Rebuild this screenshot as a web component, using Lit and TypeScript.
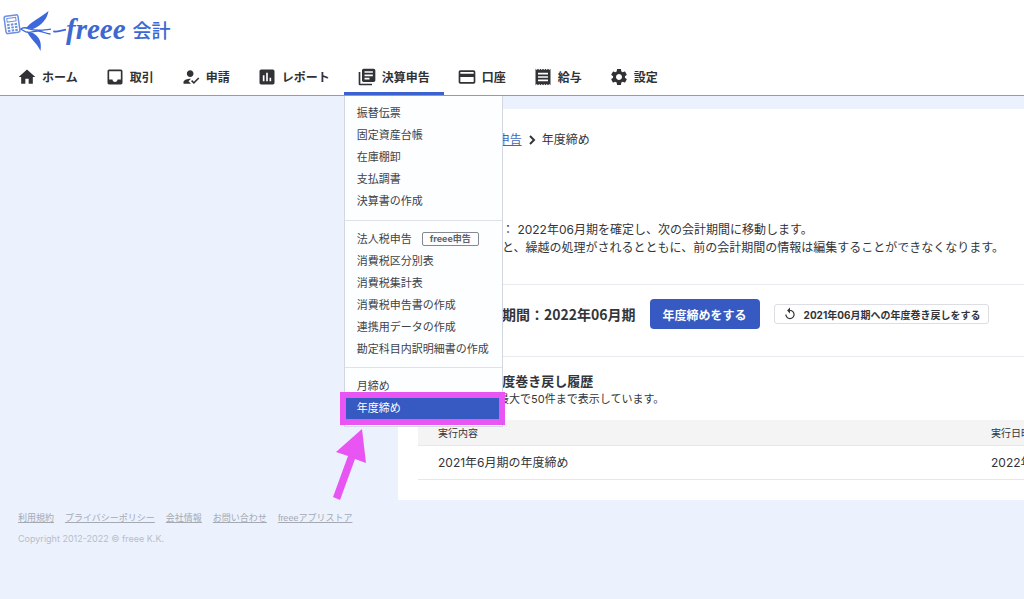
import { LitElement, html, svg, css, nothing } from "lit";
import { customElement } from "lit/decorators.js";
import { classMap } from "lit/directives/class-map.js";

const icons = {
  home: svg`<path d="M10 20v-6h4v6h5v-8h3L12 3 2 12h3v8z"/>`,
  inbox: svg`<path d="M19 3H5c-1.1 0-2 .9-2 2v14c0 1.1.9 2 2 2h14c1.1 0 2-.9 2-2V5c0-1.100-.9-2-2-2zm0 12h-4c0 1.660-1.350 3-3 3s-3-1.340-3-3H5V5h14v10z"/>`,
  approve: svg`<path d="M9 17l3-2.940c-.39-.04-.68-.06-1-.06-2.670 0-8 1.340-8 4v2h9l-3-3zm2-5c2.210 0 4-1.790 4-4s-1.790-4-4-4-4 1.790-4 4 1.790 4 4 4m4.470 8.500L12 17l1.400-1.410 2.070 2.080 5.130-5.170 1.400 1.410z"/>`,
  chart: svg`<path d="M19 3H5c-1.100 0-2 .9-2 2v14c0 1.100.9 2 2 2h14c1.100 0 2-.9 2-2V5c0-1.100-.9-2-2-2zM9 17H7v-7h2v7zm4 0h-2V7h2v10zm4 0h-2v-4h2v4z"/>`,
  books: svg`<path d="M4 6H2v14c0 1.100.9 2 2 2h14v-2H4V6zm16-4H8c-1.100 0-2 .9-2 2v12c0 1.100.9 2 2 2h12c1.100 0 2-.9 2-2V4c0-1.100-.9-2-2-2zm-1 9H9V9h10v2zm-4 4H9v-2h6v2zm4-8H9V5h10v2z"/>`,
  card: svg`<path d="M20 4H4c-1.110 0-1.990.89-1.990 2L2 18c0 1.110.89 2 2 2h16c1.110 0 2-.89 2-2V6c0-1.110-.89-2-2-2zm0 14H4v-6h16v6zm0-10H4V6h16v2z"/>`,
  receipt: svg`<path d="M18 17H6v-2h12v2zm0-4H6v-2h12v2zm0-4H6V7h12v2zM3 22l1.500-1.500L6 22l1.500-1.500L9 22l1.500-1.500L12 22l1.500-1.500L15 22l1.500-1.500L18 22l1.500-1.500L21 22V2l-1.500 1.500L18 2l-1.500 1.500L15 2l-1.500 1.500L12 2l-1.500 1.500L9 2 7.500 3.500 6 2 4.500 3.500 3 2v20z"/>`,
  gear: svg`<path d="M19.140 12.940c.04-.3.06-.61.06-.94 0-.32-.02-.64-.07-.94l2.030-1.580c.18-.14.23-.41.12-.61l-1.920-3.320c-.12-.22-.37-.29-.59-.22l-2.390.96c-.5-.38-1.030-.7-1.620-.94l-.36-2.540c-.04-.24-.24-.41-.48-.41h-3.840c-.24 0-.43.17-.47.41l-.36 2.540c-.59.24-1.130.57-1.620.94l-2.390-.96c-.22-.08-.47 0-.59.22L2.740 8.870c-.12.21-.08.47.12.61l2.030 1.580c-.05.3-.09.63-.09.94s.02.64.07.94l-2.030 1.580c-.18.14-.23.41-.12.61l1.920 3.320c.12.22.37.29.59.22l2.390-.96c.5.38 1.030.7 1.620.94l.36 2.540c.05.24.24.41.48.41h3.840c.24 0 .44-.17.47-.41l.36-2.540c.59-.24 1.130-.56 1.620-.94l2.390.96c.22.08.47 0 .59-.22l1.920-3.320c.12-.22.07-.47-.12-.61l-2.010-1.580zM12 15.600c-1.980 0-3.600-1.620-3.600-3.600s1.620-3.600 3.600-3.600 3.600 1.620 3.600 3.600-1.620 3.600-3.600 3.600z"/>`,
};

const navItems: { icon: keyof typeof icons; label: string; open?: boolean }[] = [
  { icon: "home", label: "ホーム" },
  { icon: "inbox", label: "取引" },
  { icon: "approve", label: "申請" },
  { icon: "chart", label: "レポート" },
  { icon: "books", label: "決算申告", open: true },
  { icon: "card", label: "口座" },
  { icon: "receipt", label: "給与" },
  { icon: "gear", label: "設定" },
];

const menuGroups: { label: string; badge?: string; selected?: boolean }[][] = [
  [
    { label: "振替伝票" },
    { label: "固定資産台帳" },
    { label: "在庫棚卸" },
    { label: "支払調書" },
    { label: "決算書の作成" },
  ],
  [
    { label: "法人税申告", badge: "freee申告" },
    { label: "消費税区分別表" },
    { label: "消費税集計表" },
    { label: "消費税申告書の作成" },
    { label: "連携用データの作成" },
    { label: "勘定科目内訳明細書の作成" },
  ],
  [{ label: "月締め" }, { label: "年度締め", selected: true }],
];

@customElement("closing-menu")
class ClosingMenu extends LitElement {
  static styles = css`
    :host {
      display: block;
      background: #fdfeff;
      border: 1px solid #d3d7e0;
      border-top: 0;
      font-size: 11px;
      line-height: 22px;
    }
    .group {
      list-style: none;
      margin: 0;
      padding: 6px 0 8px;
    }
    .group + .group {
      border-top: 1px solid #dfe2e8;
      padding: 7px 0;
    }
    .item {
      position: relative;
    }
    .link {
      display: flex;
      align-items: center;
      gap: 10px;
      padding: 0 12px;
      color: #404247;
      text-decoration: none;
      white-space: nowrap;
    }
    .selected {
      background: #365ac2;
      color: #fff;
    }
    .badge {
      border: 1px solid #85888f;
      border-radius: 2px;
      padding: 0 7px;
      font-size: 9px;
      line-height: 12px;
      font-weight: 700;
      color: #606268;
    }
    .marker {
      position: absolute;
      inset: -5px -3px -6px -5px;
      border: 6px solid #e855f2;
      pointer-events: none;
    }
    .arrow {
      position: absolute;
      left: -14px;
      top: 30px;
      width: 40px;
      height: 76px;
      fill: #e855f2;
    }
  `;

  render() {
    return menuGroups.map(
      (group) => html`<ul class="group">
        ${group.map(
          (item) => html`<li class="item">
            <a class=${classMap({ link: true, selected: !!item.selected })} href="#">
              ${item.label}
              ${item.badge ? html`<span class="badge">${item.badge}</span>` : nothing}
            </a>
            ${item.selected
              ? html`<span class="marker"></span>
                  <svg class="arrow" viewBox="0 0 40 76" aria-hidden="true">
                    <path d="M31 2 35 36 24 32 9 73 2 70 17 29 5 25z" />
                  </svg>`
              : nothing}
          </li>`
        )}
      </ul>`
    );
  }
}

@customElement("site-header")
class SiteHeader extends LitElement {
  static styles = css`
    :host {
      display: block;
      background: #fff;
      border-bottom: 1px solid #7f9bd3;
    }
    .brand {
      display: flex;
      align-items: center;
      height: 58px;
      color: #3d68d2;
      text-decoration: none;
    }
    .mark {
      width: 66px;
      height: 58px;
      flex: none;
    }
    .wordmark {
      font: italic 700 29px/36px "Liberation Serif", serif;
    }
    .product {
      margin-left: 7px;
      font-size: 19px;
      font-weight: 500;
    }
    .nav {
      display: flex;
      padding-left: 4px;
      height: 37px;
    }
    .tab {
      position: relative;
    }
    .link {
      box-sizing: border-box;
      height: 100%;
      display: flex;
      align-items: center;
      gap: 5px;
      padding: 3px 14px 0 13px;
      border-bottom: 3px solid transparent;
      font-size: 12px;
      font-weight: 700;
      color: #303236;
      text-decoration: none;
      white-space: nowrap;
    }
    .open {
      border-bottom-color: #3b62d0;
    }
    .icon {
      width: 20px;
      height: 20px;
      fill: currentColor;
    }
    .menu {
      position: absolute;
      top: calc(100% + 1px);
      left: 0;
      width: 157px;
      z-index: 2;
    }
  `;

  render() {
    return html`
      <a class="brand" href="#">
        <svg class="mark" viewBox="0 0 66 58" aria-hidden="true">
          <g transform="rotate(-8 12 24)">
            <rect x="5" y="15.500" width="14" height="17.500" rx="2" fill="#fff" stroke="#6d8fe0" stroke-width="1.500" />
            <rect x="7.500" y="18" width="9" height="3.500" fill="none" stroke="#6d8fe0" />
            <path fill="#6d8fe0" d="M7 23.500h2.500v2H7zM10.800 23.500h2.500v2h-2.500zM14.500 23.500H17v2h-2.500zM7 26.500h2.500v2H7zM10.800 26.500h2.500v2h-2.500zM14.500 26.500H17v2h-2.500zM7 29.500h2.500v2H7zM10.800 29.500h2.500v2h-2.500zM14.500 29.500H17v2h-2.500z" />
          </g>
          <path fill="#3d68dc" d="M26 28.500C30 22 40 18 48.500 11 47 19 42 25 33 29z" />
          <path fill="#3d68dc" d="M27 31.500l6 1.500c6 4 9 8 7.500 18C37 43 31 40 27 31.500z" />
          <path fill="none" stroke="#3d68dc" stroke-width="1.300" d="M20.500 29.300C23 27 26 27.500 29 28.800c7 2.700 14 1.200 22 .4M20.500 29.300c3 .2 3 3 8 3 4 0 6-1.500 10-1.300 4 .2 8 3 12 3" />
          <path fill="none" stroke="#3d68dc" stroke-width="1.800" stroke-linecap="round" d="M54 31.500c5 1 10-2 17-3" />
        </svg>
        <span class="wordmark">freee</span>
        <span class="product">会計</span>
      </a>
      <nav class="nav">
        ${navItems.map(
          (item) => html`<div class="tab">
            <a class=${classMap({ link: true, open: !!item.open })} href="#">
              <svg class="icon" viewBox="0 0 24 24" aria-hidden="true">${icons[item.icon]}</svg>
              ${item.label}
            </a>
            ${item.open ? html`<closing-menu class="menu"></closing-menu>` : nothing}
          </div>`
        )}
      </nav>
    `;
  }
}

@customElement("closing-page")
class ClosingPage extends LitElement {
  static styles = css`
    :host {
      display: block;
      background: #fff;
      padding: 22px 0 20px 20px;
      color: #333539;
      font-size: 12px;
      line-height: 18px;
      white-space: nowrap;
      overflow: hidden;
    }
    .crumbs {
      display: flex;
      align-items: center;
    }
    .crumb {
      color: #3f68b8;
      text-decoration: underline;
    }
    .chevron {
      width: 8px;
      height: 10px;
      margin: 0 6px;
      fill: none;
      stroke: #333539;
      stroke-width: 2;
    }
    .lead {
      margin: 72px 0 0;
      padding-bottom: 27px;
      border-bottom: 1px solid #e9ebef;
    }
    .period {
      display: flex;
      align-items: center;
      gap: 14px;
      padding: 14px 0 27px;
      border-bottom: 1px solid #e9ebef;
    }
    .title {
      margin: 0;
      font-family: "Noto Sans CJK JP", sans-serif;
      font-size: 14px;
      line-height: 20px;
      font-weight: 700;
    }
    .subtitle {
      margin: 0;
      font-size: 13px;
      line-height: 20px;
      font-weight: 700;
    }
    .primary,
    .secondary {
      font-family: inherit;
      font-weight: 700;
      white-space: nowrap;
    }
    .primary {
      height: 30px;
      padding: 0 13px;
      border: 0;
      border-radius: 4px;
      background: #365ac2;
      color: #fff;
      font-size: 12px;
    }
    .secondary {
      display: flex;
      align-items: center;
      gap: 7px;
      height: 20px;
      padding: 0 8px;
      border: 1px solid #dcdee3;
      border-radius: 3px;
      background: #fff;
      color: #333539;
      font-size: 10px;
    }
    .undo {
      width: 14px;
      height: 14px;
      fill: currentColor;
    }
    .history {
      padding-top: 14px;
    }
    .note {
      margin: 0 0 13px;
      font-size: 11px;
      line-height: 16px;
    }
    .log {
      width: 100%;
      table-layout: fixed;
      border-collapse: separate;
      border-spacing: 0;
    }
    .cell {
      padding: 0 0 0 20px;
      border-bottom: 1px solid #e6e7ea;
      text-align: left;
      overflow: hidden;
      height: 33px;
      font-size: 12px;
      font-weight: 400;
    }
    .head {
      height: 25px;
      font-size: 10px;
      background: #f5f4f5;
    }
    .date {
      width: 33px;
    }
  `;

  render() {
    const chevron = html`<svg class="chevron" viewBox="0 0 8 10" aria-hidden="true">
      <path d="M2 1l4 4-4 4" />
    </svg>`;
    return html`
      <nav class="crumbs">
        <a class="crumb" href="#">ホーム</a>${chevron}
        <a class="crumb" href="#">決算申告</a>${chevron}
        <span>年度締め</span>
      </nav>
      <p class="lead">
        年度締めをする： 2022年06月期を確定し、次の会計期間に移動します。<br />
        年度締めをすると、繰越の処理がされるとともに、前の会計期間の情報は編集することができなくなります。
      </p>
      <section class="period">
        <h2 class="title">確定する会計期間：2022年06月期</h2>
        <button class="primary" type="button">年度締めをする</button>
        <button class="secondary" type="button">
          <svg class="undo" viewBox="0 0 24 24" aria-hidden="true">
            <path d="M12 5V1L7 6l5 5V7c3.310 0 6 2.690 6 6s-2.690 6-6 6-6-2.690-6-6H4c0 4.420 3.580 8 8 8s8-3.580 8-8-3.580-8-8-8z" />
          </svg>
          2021年06月期への年度巻き戻しをする
        </button>
      </section>
      <section class="history">
        <h2 class="subtitle">年度締め ・ 年度巻き戻し履歴</h2>
        <p class="note">直近の履歴から 最大で50件まで表示しています。</p>
        <table class="log">
          <thead>
            <tr>
              <th class="cell head" scope="col">実行内容</th>
              <th class="cell head date" scope="col">実行日時</th>
            </tr>
          </thead>
          <tbody>
            <tr>
              <td class="cell">2021年6月期の年度締め</td>
              <td class="cell date">2022年</td>
            </tr>
          </tbody>
        </table>
      </section>
    `;
  }
}

@customElement("app-root")
class AppRoot extends LitElement {
  static styles = css`
    :host {
      display: block;
      min-height: 100vh;
      overflow: hidden;
      background: #ebf2fd;
      font-family: "Inter", "Noto Sans CJK JP", sans-serif;
    }
    .page {
      margin: 13px 0 0 398px;
    }
    .footer {
      padding: 11px 18px;
      font-family: "Liberation Sans", "Noto Sans CJK JP", sans-serif;
      font-size: 9px;
      line-height: 14px;
      color: #b9bdc8;
    }
    .links {
      display: flex;
      gap: 11px;
    }
    .link {
      color: #a5a9b4;
      text-decoration: underline;
    }
    .copyright {
      margin: 7px 0 0;
      font-family: "Inter", sans-serif;
    }
  `;

  render() {
    const links = ["利用規約", "プライバシーポリシー", "会社情報", "お問い合わせ", "freeeアプリストア"];
    return html`
      <site-header></site-header>
      <closing-page class="page"></closing-page>
      <footer class="footer">
        <div class="links">${links.map((l) => html`<a class="link" href="#">${l}</a>`)}</div>
        <p class="copyright">Copyright 2012-2022 © freee K.K.</p>
      </footer>
    `;
  }
}
